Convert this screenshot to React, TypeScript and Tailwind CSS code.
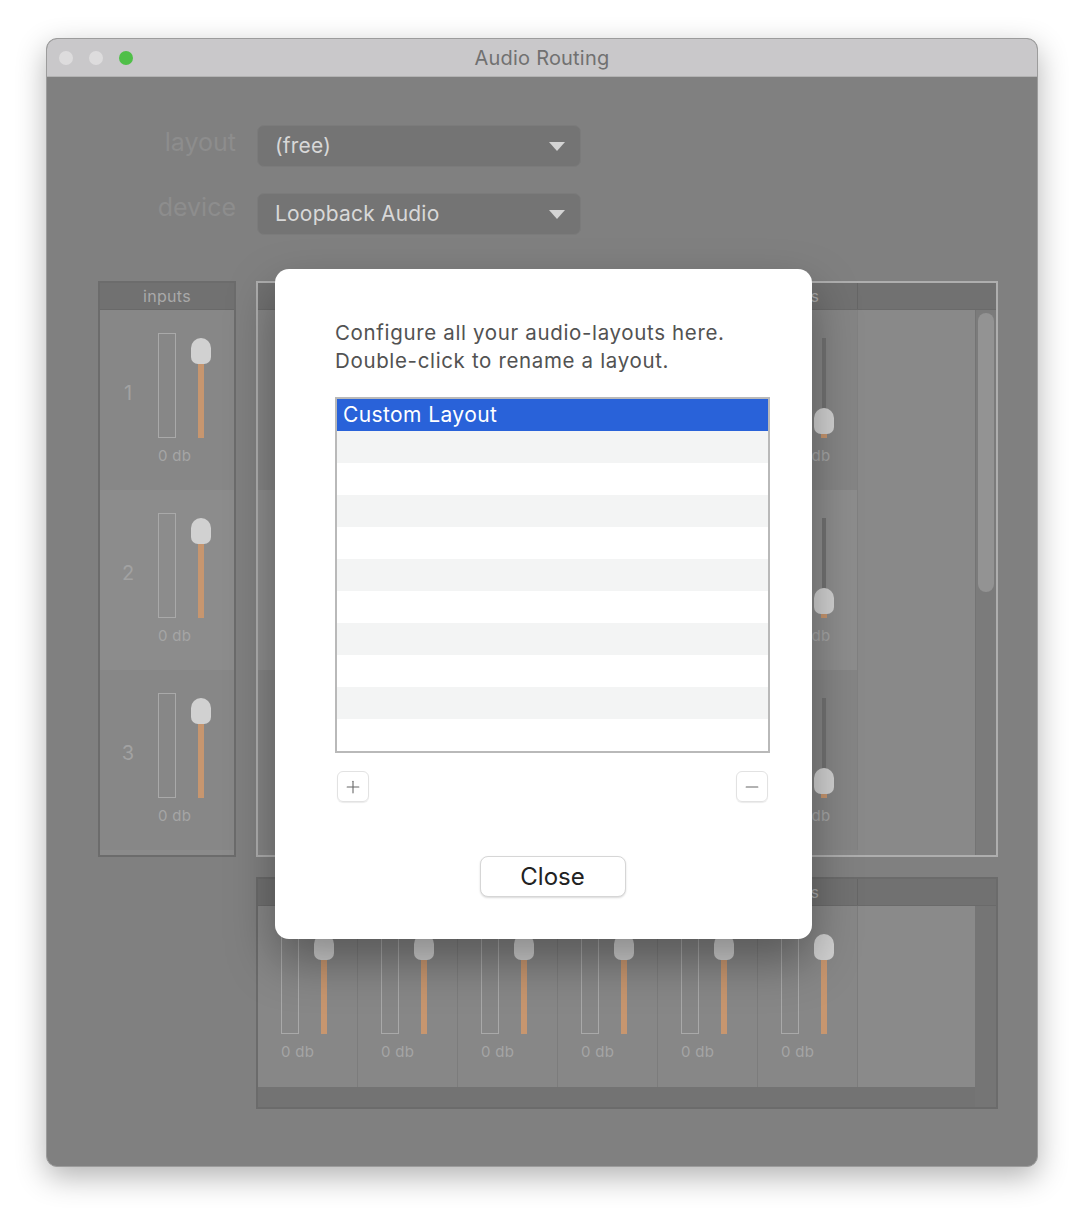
import { Minus, Plus } from "lucide-react";

// Fader strip: level meter outline + slider (knob on top, or pulled low with dark track above)
function Fader({ low = false }: { low?: boolean }) {
  return (
    <div className="flex items-start gap-[15px]">
      <div className="w-[18px] h-[105px] border-[1.5px] border-[#a9a9a9]" />
      <div className="w-[20px] h-[105px] pt-[5px] flex flex-col items-center">
        {low && <div className="w-[4px] h-[70px] bg-[#727272]" />}
        <div className="w-[20px] h-[26px] shrink-0 rounded-t-[10px] rounded-b-[7px] bg-[#d1d1d1]" />
        <div className="w-[6px] flex-1 bg-[#c7966f]" />
      </div>
    </div>
  );
}

function Strip({ low = false }: { low?: boolean }) {
  return (
    <div className="pl-[23px] pt-[23px]">
      <Fader low={low} />
      <div className="mt-[9px] text-[15px] leading-[18px] tracking-[0.3px] text-[#a5a5a5]">
        {low ? "-20 db" : "0 db"}
      </div>
    </div>
  );
}

function PopUp({ value }: { value: string }) {
  return (
    <div className="w-[324px] h-[42px] rounded-[7px] bg-[#747474] border border-[#7b7b7b] flex items-center justify-between pl-[17px] pr-[15px]">
      <span className="text-[21px] tracking-[0.2px] text-[#d8d8d8]">{value}</span>
      <svg width="16" height="9" viewBox="0 0 16 9">
        <path d="M0 0h16L8 9z" fill="#d4d4d4" />
      </svg>
    </div>
  );
}

function HeaderCells() {
  return (
    <div className="h-[27px] shrink-0 bg-[#717171] border-b border-[#6a6a6a] flex">
      {cols.map((c) => (
        <div key={c} className="w-[100px] shrink-0 border-r border-[#666666] text-right pr-[38px] text-[16px] leading-[26px] text-[#a9a9a9]">
          {c === 6 ? "outputs" : ""}
        </div>
      ))}
    </div>
  );
}

const rows = [1, 2, 3];
const cols = [1, 2, 3, 4, 5, 6];

export default function App() {
  return (
    <div className="w-[1084px] h-[1222px] bg-white pt-[38px] pl-[46px] font-[Inter,'Noto_Sans',sans-serif]">
      <div className="relative w-[992px] h-[1129px] rounded-[11px] overflow-hidden border border-[#9c9c9c] shadow-[0_10px_30px_rgba(0,0,0,0.3)] bg-[#808080] flex flex-col">
        {/* Title bar */}
        <div className="relative h-[38px] shrink-0 bg-[#c9c8ca] border-b border-[#b3b3b3] flex items-center pl-[12px] gap-[16px]">
          <div className="w-[14px] h-[14px] rounded-full bg-[#dddcdd]" />
          <div className="w-[14px] h-[14px] rounded-full bg-[#dddcdd]" />
          <div className="w-[14px] h-[14px] rounded-full bg-[#4fbf48]" />
          <div className="absolute inset-0 flex items-center justify-center text-[20px] tracking-[0.2px] text-[#717171] pointer-events-none">
            Audio Routing
          </div>
        </div>

        {/* Window body */}
        <div className="flex-1 pl-[51px] pt-[48px]">
          <div className="flex flex-col gap-[26px]">
            <div className="flex items-center gap-[21px]">
              <div className="w-[138px] -translate-y-[3px] text-right text-[25px] text-[#8d8d8d]">layout</div>
              <PopUp value="(free)" />
            </div>
            <div className="flex items-center gap-[21px]">
              <div className="w-[138px] -translate-y-[6px] text-right text-[25px] text-[#8d8d8d]">device</div>
              <PopUp value="Loopback Audio" />
            </div>
          </div>

          <div className="mt-[46px] grid grid-cols-[138px_742px] grid-rows-[576px_232px] gap-x-[20px] gap-y-[20px]">
            {/* Inputs */}
            <div className="border-2 border-[#6c6c6c] bg-[#8b8b8b] flex flex-col">
              <div className="h-[27px] shrink-0 bg-[#717171] border-b border-[#696969] text-center text-[16px] leading-[26px] tracking-[0.3px] text-[#a9a9a9]">
                inputs
              </div>
              {rows.map((r) => (
                <div key={r} className={`h-[180px] shrink-0 flex ${r === 2 ? "bg-[#8c8c8c]" : "bg-[#878787]"}`}>
                  <div className="w-[56px] pt-[37px] h-[128px] flex items-center justify-center text-[20px] text-[#a2a2a2]">
                    {r}
                  </div>
                  <div className="-ml-[21px]">
                    <Strip />
                  </div>
                </div>
              ))}
            </div>

            {/* Routing matrix */}
            <div className="border-2 border-[#aeaeae] bg-[#888888] flex flex-col overflow-hidden">
              <HeaderCells />
              <div className="flex-1 flex">
                <div className="flex flex-col">
                  {rows.map((r) => (
                    <div key={r} className="h-[180px] flex">
                      {cols.map((c) => (
                        <div key={c} className={`w-[100px] shrink-0 border-r border-[#818181] ${r === 2 ? "bg-[#8d8d8d]" : "bg-[#858585]"}`}>
                          <Strip low />
                        </div>
                      ))}
                    </div>
                  ))}
                </div>
                <div className="flex-1 bg-[#898989]" />
                <div className="w-[21px] bg-[#7b7b7b] border-l border-[#747474] pt-[3px]">
                  <div className="mx-auto w-[16px] h-[279px] rounded-full bg-[#939393]" />
                </div>
              </div>
            </div>

            {/* Outputs */}
            <div className="col-start-2 border-2 border-[#6b6b6b] flex flex-col overflow-hidden">
              <HeaderCells />
              <div className="flex-1 flex">
                <div className="flex-1 flex flex-col">
                  <div className="h-[181px] flex">
                    {cols.map((c) => (
                      <div key={c} className="w-[100px] shrink-0 bg-[#878787] border-r border-[#7c7c7c]">
                        <Strip />
                      </div>
                    ))}
                    <div className="flex-1 bg-[#8a8a8a]" />
                  </div>
                  <div className="flex-1 bg-[#737373]" />
                </div>
                <div className="w-[21px] bg-[#757575]" />
              </div>
            </div>
          </div>
        </div>

        {/* Layouts sheet */}
        <div className="absolute left-[228px] top-[230px] w-[537px] h-[670px] rounded-[14px] bg-white shadow-[0_22px_48px_rgba(0,0,0,0.35)] pl-[60px] pr-[42px] pt-[50px]">
          <p className="text-[20.5px] leading-[28px] tracking-[0.65px] text-[#525252]">
            Configure all your audio-layouts here.
            <br />
            Double-click to rename a layout.
          </p>
          <div className="mt-[22px] h-[356px] border-2 border-[#b9b9b9] overflow-hidden">
            {Array.from({ length: 11 }).map((_, i) => (
              <div
                key={i}
                className={`h-[32px] px-[6px] text-[21px] leading-[32px] tracking-[0.4px] ${
                  i === 0 ? "bg-[#2962d9] text-white" : i % 2 === 1 ? "bg-[#f3f4f4]" : "bg-white"
                }`}
              >
                {i === 0 ? "Custom Layout" : ""}
              </div>
            ))}
          </div>
          <div className="mt-[18px] px-[2px] flex justify-between">
            <button className="w-[32px] h-[31px] rounded-[6px] border border-[#e2e2e2] shadow-[0_1px_1px_rgba(0,0,0,0.08)] flex items-center justify-center text-[#666666]">
              <Plus size={20} strokeWidth={1.3} />
            </button>
            <button className="w-[32px] h-[31px] rounded-[6px] border border-[#e2e2e2] shadow-[0_1px_1px_rgba(0,0,0,0.08)] flex items-center justify-center text-[#666666]">
              <Minus size={20} strokeWidth={1.3} />
            </button>
          </div>
          <div className="mt-[54px] flex justify-center">
            <button className="w-[146px] h-[41px] rounded-[8px] border border-[#d6d6d6] bg-white shadow-[0_1px_2px_rgba(0,0,0,0.15)] text-[24px] text-[#222222]">
              Close
            </button>
          </div>
        </div>
      </div>
    </div>
  );
}
